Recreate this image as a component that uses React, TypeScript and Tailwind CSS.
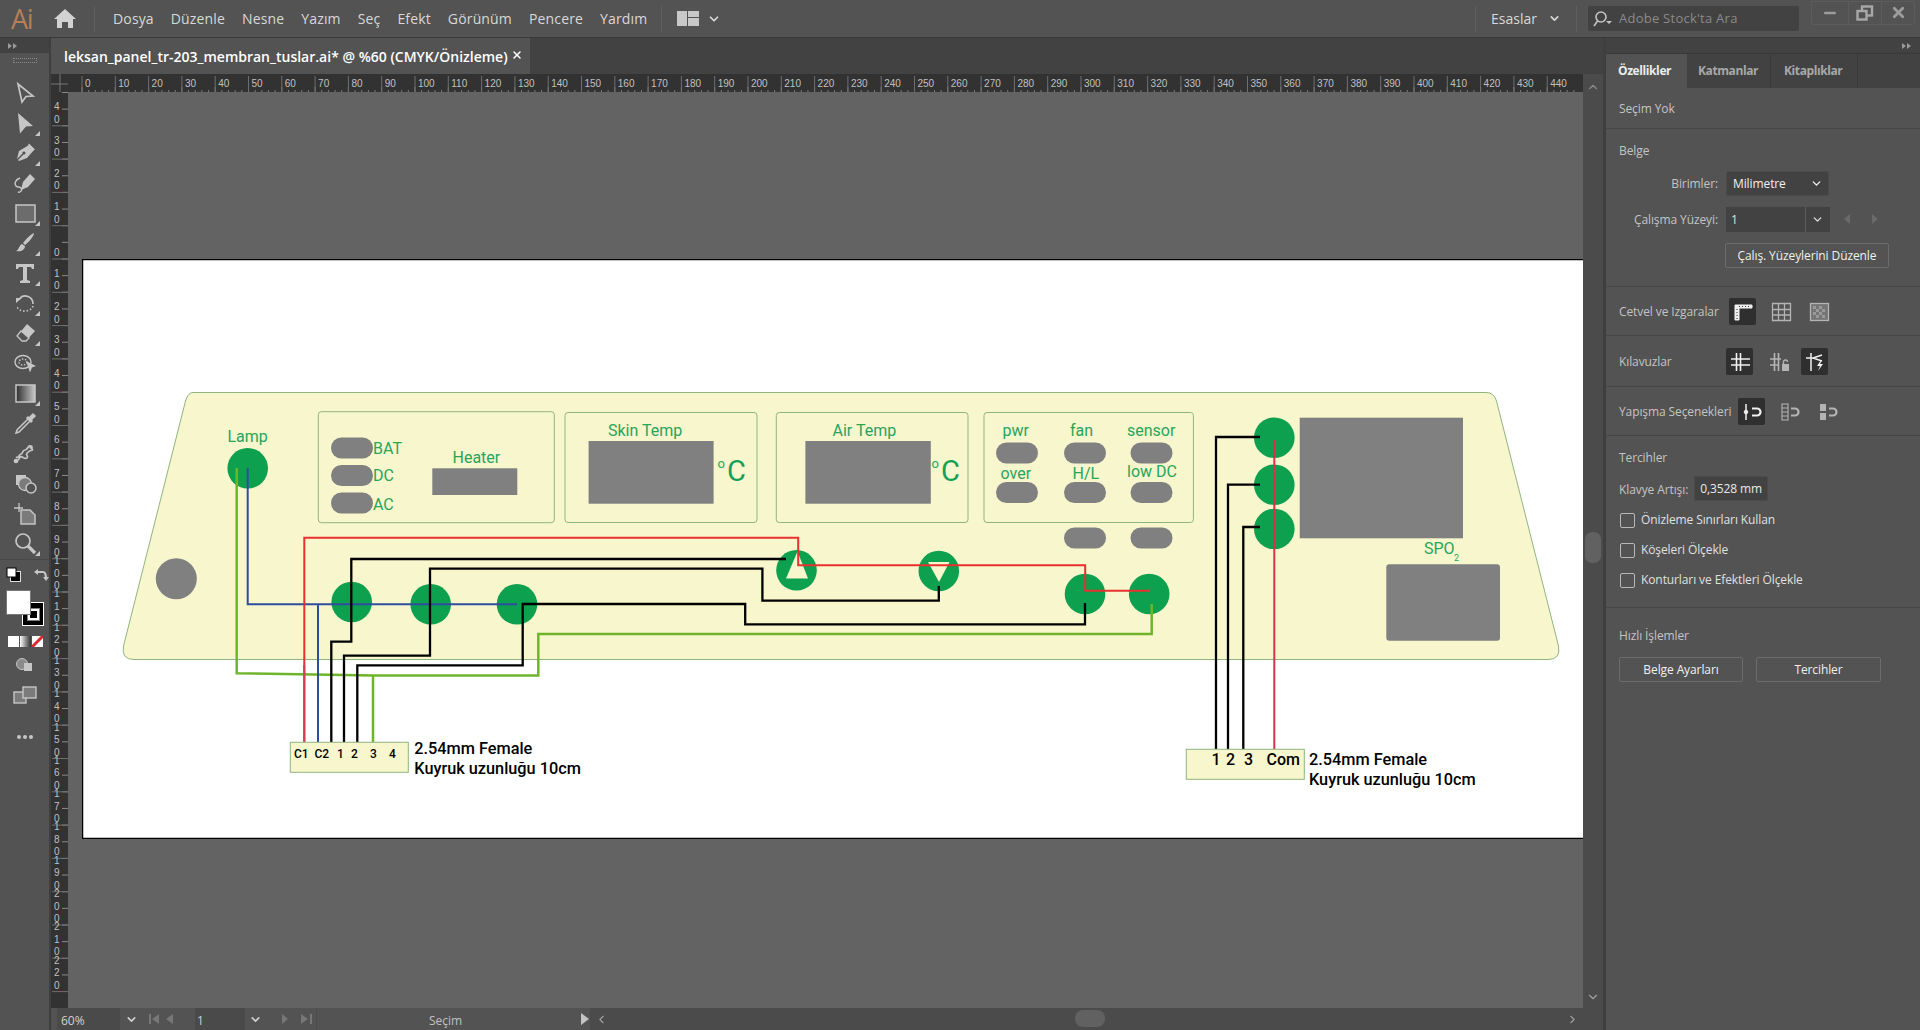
import { ChevronDown, ChevronUp, ChevronLeft, ChevronRight, Minus, X } from "lucide-react";
import type { ReactNode } from "react";

const menus = ["Dosya", "Düzenle", "Nesne", "Yazım", "Seç", "Efekt", "Görünüm", "Pencere", "Yardım"];

function TopBar() {
  return (
    <div className="h-[38px] bg-[#535353] border-b border-[#3a3a3a] flex items-center relative text-[#d8d8d8] text-[14px]">
      <div className="w-[44px] pl-[11px] text-[27px] leading-none text-[#b67f55] font-['Open_Sans',sans-serif] tracking-tighter">Ai</div>
      <svg className="ml-[10px]" width="22" height="19" viewBox="0 0 22 19" fill="#d2d2d2">
        <path d="M11 0 22 10h-3v9h-5v-6H8v6H3v-9H0z" />
      </svg>
      <div className="ml-[18px] h-[26px] w-px bg-[#5e5e5e]" />
      <div className="ml-[18px] flex gap-[17px] tracking-[0.15px]">
        {menus.map((m) => (
          <span key={m}>{m}</span>
        ))}
      </div>
      <div className="ml-[14px] h-[26px] w-px bg-[#5e5e5e]" />
      <svg className="ml-[15px]" width="22" height="15" viewBox="0 0 22 15">
        <rect width="10" height="15" fill="#c8c8c8" />
        <rect x="11" width="11" height="6" fill="#c8c8c8" />
        <rect x="11" y="7" width="11" height="8" fill="#c8c8c8" />
      </svg>
      <ChevronDown className="ml-[8px] w-[14px] h-[14px]" strokeWidth={3} />
      <div className="ml-auto h-[26px] w-px bg-[#5e5e5e]" />
      <span className="ml-[15px]">Esaslar</span>
      <ChevronDown className="ml-[11px] w-[13px] h-[13px]" strokeWidth={3} />
      <div className="ml-[15px] h-[26px] w-px bg-[#5e5e5e]" />
      <div className="ml-[11px] w-[211px] h-[25px] bg-[#424242] rounded-[2px] flex items-center pl-[3px] text-[#8a8a8a] text-[13px] tracking-[0.25px]">
        <svg width="27" height="18" viewBox="0 0 27 18" fill="none" stroke="#c4c4c4" strokeWidth="1.6">
          <circle cx="10" cy="7" r="5" />
          <path d="M6.5 11 3 16" />
          <path d="M15 11h6l-3 3z" fill="#c4c4c4" stroke="none" />
        </svg>
        <span className="ml-[1px]">Adobe Stock'ta Ara</span>
      </div>
      <div className="ml-[12px] mr-[5px] w-[104px] h-[24px] -mt-[12px] border border-[#5c5c5c] rounded-b-[3px] flex items-center text-[#9c9c9c]">
        <div className="w-[36px] flex justify-center">
          <Minus className="w-[16px] h-[16px]" strokeWidth={4} />
        </div>
        <div className="w-[34px] h-full border-x border-[#5c5c5c] flex items-center justify-center">
          <svg width="18" height="16" viewBox="0 0 18 16" fill="none" stroke="#a8a8a8" strokeWidth="2.4">
            <rect x="6" y="1.5" width="10" height="9" />
            <rect x="1.5" y="6" width="9" height="8.5" fill="#535353" />
          </svg>
        </div>
        <div className="flex-1 flex justify-center">
          <X className="w-[17px] h-[17px]" strokeWidth={4} />
        </div>
      </div>
    </div>
  );
}

function Collapse() {
  return (
    <svg width="9" height="6" viewBox="0 0 9 6" fill="#9a9a9a">
      <path d="M0 0v6l4-3zM5 0v6l4-3z" />
    </svg>
  );
}

const c = "#c6c6c6";
const tools: { icon: ReactNode; corner?: boolean }[] = [
  { icon: <path d="M5 3 20 15l-7 .5-4 5.5z" fill="none" stroke={c} strokeWidth="1.7" /> },
  { icon: <path d="M5 2 20 15l-7 .5-6 7z" fill={c} />, corner: true },
  { icon: <g><path d="M16 4 21 9l-7 8-8 3-1-1 5.500-5.500a1.500 1.500 0 1 0-1-1L4 18l2-8z" fill={c} /><path d="M16 2.500 22 8.500l-1.500 1L15 4z" fill={c} /></g>, corner: true },
  { icon: <g><path d="M17 3 22 8l-7 8-7 3 2-8z" fill={c} /><path d="M7 7C2 9 1 13 3 15s3 0 5 2-1 5-3 4" fill="none" stroke={c} strokeWidth="1.500" /></g> },
  { icon: <rect x="3" y="4" width="19" height="17" fill="#6c6c6c" stroke={c} strokeWidth="1.500" />, corner: true },
  { icon: <g><path d="M21 2c0 3-5 9-9 12l-2-2C13 8 18 3 21 2z" fill={c} /><path d="M9 13l3 2c0 4-4 6-9 5 3-1 3-6 6-7z" fill={c} /></g>, corner: true },
  { icon: <path d="M3 3h18v5h-2l-1-2h-4v13l3 1v2H7v-2l3-1V6H6L5 8H3z" fill={c} />, corner: true },
  { icon: <g fill="none" stroke={c} strokeWidth="1.600"><path d="M7 7c4-4 13-2 13 6" /><path d="M20 15c-1 5-12 8-16 1" strokeDasharray="1.500 2" /><path d="M3 12V7h6z" fill={c} stroke="none" /></g>, corner: true },
  { icon: <g><path d="M14 3 22 10l-9 10-8-6z" fill={c} /><path d="M8 10l8 7-3 3H9l-5-5z" fill="#535353" stroke={c} strokeWidth="1.300" /></g>, corner: true },
  { icon: <g fill="none" stroke={c} strokeWidth="1.400"><ellipse cx="10" cy="11" rx="8" ry="6.500" /><ellipse cx="10" cy="11" rx="4" ry="3" strokeDasharray="1.500 1.500" /><path d="M13 10 23 15l-4 1.500-2 5z" fill={c} stroke="none" /></g> },
  { icon: <g><rect x="3" y="4" width="19" height="17" stroke={c} strokeWidth="1.500" fill="url(#toolgrad)" /></g>, corner: true },
  { icon: <g fill="none" stroke={c} strokeWidth="1.500"><path d="M15 8 4 19l-1 3 3-1L17 10" /><path d="M14 6l5 5M17 7l3-3 1 1-3 3" strokeWidth="3" /></g> },
  { icon: <g fill="none" stroke={c} strokeWidth="1.700"><path d="M3 16c3 2 3-3 5-3s1-4 4-4 3-5 5-4c2 0 1 3 3 4-3 0-4 1-6 3s2 3 0 5-6-3-7-1-1 3-2 3" /><circle cx="3" cy="20" r="1.500" fill={c} /><circle cx="18" cy="6" r="1" fill={c} /></g> },
  { icon: <g><rect x="3" y="4" width="10" height="10" fill={c} /><circle cx="12" cy="13" r="6.500" fill="#7b7b7b" stroke={c} strokeWidth="1.300" /><circle cx="18" cy="17" r="5" fill="#535353" stroke={c} strokeWidth="1.500" /></g> },
  { icon: <g><path d="M6 2v9M1 7h9" stroke={c} strokeWidth="1.300" /><path d="M8 9h9l5 5v9H8z" fill="#7b7b7b" stroke={c} strokeWidth="1.500" /></g> },
  { icon: <g fill="none" stroke={c} strokeWidth="1.700"><circle cx="10" cy="10" r="7" /><path d="M15 15l7 7" strokeWidth="3.200" /></g>, corner: true },
];

function ToolBar() {
  return (
    <div className="w-[51px] bg-[#535353] border-r-[2px] border-[#3f3f3f] flex flex-col items-center relative">
      <div className="w-full h-[15px] bg-[#424242] flex items-center pl-[8px]">
        <Collapse />
      </div>
      <div className="mt-[5px] w-[24px] h-[5px] border-x border-y border-dotted border-[#8a8a8a]" />
      <svg className="absolute w-0 h-0">
        <defs>
          <linearGradient id="toolgrad">
            <stop offset="0" stopColor="#2d2d2d" />
            <stop offset="1" stopColor="#c8c8c8" />
          </linearGradient>
        </defs>
      </svg>
      <div className="mt-[15px] flex flex-col">
        {tools.map((t, i) => (
          <div key={i} className="w-[30px] h-[30px] flex items-center justify-center relative">
            <svg width="24" height="24" viewBox="0 0 24 24">{t.icon}</svg>
            {t.corner && <span className="absolute right-0 bottom-[2px] w-0 h-0 border-l-[5px] border-l-transparent border-b-[5px] border-b-[#c6c6c6]" />}
          </div>
        ))}
      </div>
      <div className="w-full mt-[1px] border-t border-[#484848] pt-[5px] flex flex-col items-center">
        <div className="w-full flex items-center pl-[6px] gap-[12px] h-[20px]">
          <svg width="16" height="16" viewBox="0 0 16 16">
            <rect x="4.500" y="4.500" width="10" height="10" fill="#000" stroke="#ddd" />
            <rect x="1" y="1" width="9" height="9" fill="#fff" stroke="#000" />
          </svg>
          <svg width="15" height="15" viewBox="0 0 15 15" fill="none" stroke={c} strokeWidth="2.200">
            <path d="M3 4h6c2 0 3 2 3 7" />
            <path d="M0 4l4-3v6zM9 9h6l-3 4z" fill={c} stroke="none" />
          </svg>
        </div>
        <div className="relative w-full h-[38px] mt-[5px]">
          <div className="absolute left-[22px] top-[12px] w-[22px] h-[24px] bg-black border border-white flex items-center justify-center">
            <div className="w-[11px] h-[11px] border-[2px] border-white outline outline-[#808080]" />
          </div>
          <div className="absolute left-[6px] top-0 w-[25px] h-[25px] bg-white border border-[#777]" />
        </div>
        <div className="w-full flex pl-[8px] mt-[8px]">
          <div className="w-[11px] h-[11px] bg-white" />
          <div className="w-[11px] h-[11px] mx-[1px] bg-gradient-to-r from-white to-[#333]" />
          <svg width="11" height="11" viewBox="0 0 11 11">
            <rect width="11" height="11" fill="#fff" />
            <path d="M0 11 11 0" stroke="#e0262c" strokeWidth="3" />
          </svg>
        </div>
        <svg className="mt-[10px]" width="18" height="16" viewBox="0 0 18 16">
          <circle cx="6" cy="7" r="5.500" fill="#8a8a8a" stroke={c} />
          <rect x="8" y="6" width="8" height="8" fill={c} />
        </svg>
        <svg className="mt-[13px]" width="24" height="18" viewBox="0 0 24 18" fill="#7b7b7b" stroke={c} strokeWidth="1.400">
          <rect x="1" y="6" width="12" height="11" />
          <rect x="10" y="1" width="13" height="11" />
        </svg>
        <div className="mt-[31px] flex gap-[2px]">
          <span className="w-[4px] h-[4px] rounded-full bg-[#c6c6c6]" />
          <span className="w-[4px] h-[4px] rounded-full bg-[#c6c6c6]" />
          <span className="w-[4px] h-[4px] rounded-full bg-[#c6c6c6]" />
        </div>
      </div>
    </div>
  );
}

const hMajor = Array.from({ length: 45 }, (_, i) => i * 10);
const hMinor = Array.from({ length: 225 }, (_, i) => i * 2);
const vMajor = Array.from({ length: 27 }, (_, i) => (i - 4) * 10);
const vMinor = Array.from({ length: 54 }, (_, i) => (i - 10) * 5);

function HorizontalRuler() {
  return (
    <svg className="block bg-[#323232]" width="1532" height="18" viewBox="51 74 1532 18">
      {hMinor.map((v) => (
        <line key={v} x1={82 + v * 3.33} x2={82 + v * 3.33} y1={v % 5 === 0 ? 87 : 90} y2="92" stroke="#7c7c7c" />
      ))}
      {hMajor.map((v) => (
        <g key={v}>
          <line x1={82 + v * 3.33} x2={82 + v * 3.33} y1="76" y2="92" stroke="#6e6e6e" />
          <text x={85 + v * 3.33} y="87" className="text-[10px] fill-[#c0c0c0] font-['Liberation_Sans',sans-serif]">{v}</text>
        </g>
      ))}
      <path d="M51 84H68M60 74V92" stroke="#777" />
    </svg>
  );
}

function VerticalRuler() {
  return (
    <svg className="block bg-[#323232] shrink-0" width="17" height="916" viewBox="51 92 17 916">
      {vMinor.map((v) => (
        <line key={v} x1="62" x2="68" y1={259 + v * 3.33} y2={259 + v * 3.33} stroke="#8a8a8a" />
      ))}
      {vMajor.map((v) => {
        const y = 259 + v * 3.33;
        const digits = String(Math.abs(v)).split("").reverse();
        return (
          <g key={v}>
            <line x1="52" x2="68" y1={y} y2={y} stroke="#6e6e6e" />
            {digits.map((d, i) => (
              <text key={i} x="54" y={y - 3 - i * 12.5} className="text-[10px] fill-[#c0c0c0] font-['Liberation_Sans',sans-serif]">{d}</text>
            ))}
          </g>
        );
      })}
    </svg>
  );
}

const pills = [
  [331, 437.5], [331, 465], [331, 492.500],
  [996, 442.500], [1064, 442.500], [1130.500, 442.500],
  [996, 482], [1064, 482], [1130.500, 482],
  [1064, 527.500], [1130.500, 527.500],
];

const greenLabels: [string, number, number][] = [
  ["Lamp", 227.500, 442], ["BAT", 373, 454], ["DC", 373, 481], ["AC", 373, 510],
  ["Heater", 452.500, 463], ["Skin Temp", 608, 436], ["Air Temp", 832.500, 436],
  ["pwr", 1002.500, 436], ["fan", 1070, 436], ["sensor", 1127, 436],
  ["over", 1000.500, 478.500], ["H/L", 1072.500, 479], ["low DC", 1127, 477],
];

const buttons = [
  [247.700, 468.300], [351.700, 602], [430.700, 604.300], [517, 604.300],
  [796.500, 570.300], [938.800, 571], [1085, 594], [1149.200, 594],
  [1274.300, 437.700], [1274.300, 484.700], [1274.300, 529],
];

const panelBoxes = [
  [318.300, 411.700, 236, 111], [565, 412.500, 192, 110], [776.300, 412.500, 191.700, 110], [984, 412.500, 209.400, 110],
];

function Diagram() {
  return (
    <svg className="block bg-white font-['Roboto',sans-serif]" width="1501" height="580" viewBox="82 259 1501 580">
      <path d="M82 259.500H1583M82.500 259V838.500M82 838.500H1583" stroke="#000" strokeWidth="1.500" fill="none" />
      <path d="M193 392.500H1486Q1494 392.500 1496.500 401L1558.500 646Q1561 659.500 1548 659.500H134Q121 659.500 123.500 646L185.500 401Q188 392.500 193 392.500Z" fill="#f8f6cd" stroke="#8fb57f" />
      {panelBoxes.map(([x, y, w, h]) => (
        <rect key={x} x={x} y={y} width={w} height={h} rx="3" fill="none" stroke="#8fb57f" />
      ))}

      <circle cx="176.300" cy="578.700" r="20.500" fill="#808080" />
      {pills.map(([x, y]) => (
        <rect key={`${x}-${y}`} x={x} y={y} width="42" height="21" rx="10.500" fill="#808080" />
      ))}
      <rect x="432.300" y="468.300" width="85" height="26.700" fill="#808080" />
      <rect x="588.600" y="441" width="125" height="62.700" fill="#808080" />
      <rect x="805.400" y="441" width="125.400" height="62.700" fill="#808080" />
      <rect x="1299.700" y="417.700" width="163.300" height="120.600" fill="#808080" />
      <rect x="1386.300" y="564.300" width="113.700" height="76.400" rx="3" fill="#808080" />

      {buttons.map(([x, y]) => (
        <circle key={`${x}-${y}`} cx={x} cy={y} r="20.300" fill="#0da04f" />
      ))}
      <path d="M797.500 551.500 808 578.500H786Z" fill="#f8f6cd" />
      <path d="M928 562H949.500L939 582Z" fill="#f8f6cd" />

      {greenLabels.map(([t, x, y]) => (
        <text key={t} x={x} y={y} className="text-[16px] fill-[#26a55c]">{t}</text>
      ))}
      <text x="717.500" y="468" className="text-[13px] fill-[#26a55c]">o</text>
      <text x="727" y="480.500" className="text-[29px] fill-[#14a056]">C</text>
      <text x="931.500" y="468" className="text-[13px] fill-[#26a55c]">o</text>
      <text x="941" y="480.500" className="text-[29px] fill-[#14a056]">C</text>
      <text x="1424" y="554" className="text-[16px] fill-[#26a55c]">SPO</text>
      <text x="1454" y="561" className="text-[9px] fill-[#26a55c]">2</text>

      <g fill="none" strokeWidth="2">
        <path d="M236.700 468V673.300L373 675.500V742M373 675.500H538.300V634H1151.700V604" stroke="#6fb52c" strokeWidth="2.500" />
        <path d="M247.700 468V604.300H517M318 604.300V742" stroke="#2e4d9e" />
        <path d="M304.300 742V537.700H798.200V565.300H1085.200V590.700H1149" stroke="#e7302f" />
        <path d="M304.300 742V665" stroke="#d83a57" />
        <path d="M1274.300 440V749" stroke="#dc2f50" />
      </g>
      <g fill="none" stroke="#000" strokeWidth="2.300">
        <path d="M331.300 742V641.700H351.300V559H786" />
        <path d="M344 742V655.700H430V568.700H762.400V600.700H938.800V586" />
        <path d="M357.300 742V665.300H522.700V604H745.200V624.300H1085V603" />
        <path d="M1216 749V437H1260M1228 749V484.700H1260M1243.300 749V527H1260" />
      </g>

      <rect x="290.300" y="742.300" width="118" height="30" fill="#f8f6cd" stroke="#8fb57f" />
      <rect x="1186.300" y="749.300" width="118" height="30" fill="#f8f6cd" stroke="#8fb57f" />
      <g className="fill-black font-medium">
        {([["C1", 294], ["C2", 314.500], ["1", 337], ["2", 351], ["3", 370], ["4", 389]] as [string, number][]).map(([t, x]) => (
          <text key={t} x={x} y="758" className="text-[12px]">{t}</text>
        ))}
        {([["1", 1211.500], ["2", 1226], ["3", 1244], ["Com", 1266.500]] as [string, number][]).map(([t, x]) => (
          <text key={t} x={x} y="765" className="text-[16px]">{t}</text>
        ))}
        <text x="414.300" y="754" className="text-[16.3px]">2.54mm Female</text>
        <text x="414.300" y="774" className="text-[16.3px]">Kuyruk uzunluğu 10cm</text>
        <text x="1309" y="765" className="text-[16.3px]">2.54mm Female</text>
        <text x="1309" y="785" className="text-[16.3px]">Kuyruk uzunluğu 10cm</text>
      </g>
    </svg>
  );
}

function StatusBar() {
  return (
    <div className="h-[22px] bg-[#535353] flex items-center text-[#d0d0d0] text-[12px]">
      <div className="ml-[6px] w-[63px] h-full bg-[#4a4a4a] pl-[4px] pt-[4px] flex items-center">60%</div>
      <div className="w-[22px] flex justify-center">
        <ChevronDown className="w-[13px] h-[13px]" strokeWidth={3} />
      </div>
      <svg className="ml-[7px] shrink-0" width="34" height="12" viewBox="0 0 34 12" fill="#777">
        <path d="M0 1h2v10H0zM10 1v10L3 6zM24 1v10l-7-5z" />
      </svg>
      <div className="ml-[12px] w-[50px] h-full bg-[#4a4a4a] pl-[2px] pt-[4px] flex items-center">1</div>
      <div className="w-[20px] flex justify-center">
        <ChevronDown className="w-[13px] h-[13px]" strokeWidth={3} />
      </div>
      <svg className="ml-[17px] shrink-0" width="34" height="12" viewBox="0 0 34 12" fill="#777">
        <path d="M0 1v10l6-5zM19 1v10l7-5zM28 1h2v10h-2z" />
      </svg>
      <div className="w-[258px] text-[#c0c0c0] border-l border-[#4c4c4c] h-full pt-[4px] flex items-center justify-center">Seçim</div>
      <svg className="ml-[7px] shrink-0" width="8" height="12" viewBox="0 0 8 12" fill="#c4c4c4">
        <path d="M0 0v12l8-6z" />
      </svg>
      <div className="ml-[1px] flex-1 h-full bg-[#4b4b4b] flex items-center relative pl-[5px]">
        <ChevronLeft className="w-[13px] h-[13px] text-[#a0a0a0]" />
        <div className="absolute left-[485px] top-[2px] w-[30px] h-[17px] rounded-[8px] bg-[#616161]" />
        <ChevronRight className="ml-auto mr-[24px] w-[13px] h-[13px] text-[#a0a0a0]" />
      </div>
    </div>
  );
}

function Section({ children, className }: { children: ReactNode; className: string }) {
  return <div className={`pl-[13px] border-b border-[#474747] ${className}`}>{children}</div>;
}

function IconBox({ active, className, children }: { active?: boolean; className: string; children: ReactNode }) {
  return (
    <div className={`absolute top-0 w-[27px] h-[27px] rounded-[2px] flex items-center justify-center ${active ? "bg-[#2f2f2f]" : ""} ${className}`}>
      <svg width="22" height="22" viewBox="0 0 22 22" fill="none" stroke={active ? "#f0f0f0" : "#b4b4b4"}>{children}</svg>
    </div>
  );
}

function Check({ label }: { label: string }) {
  return (
    <div className="flex items-center h-[30px] text-[#e0e0e0]">
      <span className="w-[15px] h-[15px] ml-px rounded-[2px] border border-[#b8b8b8]" />
      <span className="ml-[6px]">{label}</span>
    </div>
  );
}

function RightPanel() {
  return (
    <div className="w-[317px] bg-[#535353] border-l-[3px] border-[#3f3f3f] text-[12px] text-[#c4c4c4] font-['Open_Sans',sans-serif] tracking-[-0.1px]">
      <div className="h-[15px] bg-[#424242] flex items-center justify-end pr-[9px]">
        <Collapse />
      </div>
      <div className="h-[35px] flex bg-[#424242] font-bold text-[#a8a8a8] border-t border-[#383838] tracking-[-0.4px]">
        <div className="w-[81px] pl-[12px] flex items-center bg-[#535353] text-[#ececec]">Özellikler</div>
        <div className="w-[84px] pl-[11px] flex items-center border-r border-[#3a3a3a]">Katmanlar</div>
        <div className="w-[87px] pl-[13px] flex items-center border-r border-[#3a3a3a]">Kitaplıklar</div>
      </div>
      <Section className="h-[41px] pt-[2px] flex items-center">Seçim Yok</Section>
      <Section className="h-[158px] relative">
        <div className="pt-[13px]">Belge</div>
        <div className="absolute left-0 top-[42px] w-[112px] h-[25px] flex items-center justify-end">Birimler:</div>
        <div className="absolute left-[120px] top-[42px] w-[103px] h-[25px] bg-[#424242] border border-[#4b4b4b] rounded-[2px] flex items-center pl-[6px] pr-[5px] text-[#f0f0f0]">
          <span>Milimetre</span>
          <ChevronDown className="ml-auto w-[13px] h-[13px]" strokeWidth={2.500} />
        </div>
        <div className="absolute left-0 top-[78px] w-[112px] h-[25px] flex items-center justify-end whitespace-nowrap">Çalışma Yüzeyi:</div>
        <div className="absolute left-[120px] top-[78px] w-[104px] h-[25px] bg-[#424242] flex items-center text-[#e0e0e0]">
          <span className="w-[80px] pl-[5px] border-r border-[#5c5c5c] h-full flex items-center">1</span>
          <ChevronDown className="ml-[5px] w-[13px] h-[13px]" strokeWidth={2.500} />
        </div>
        <svg className="absolute left-[238px] top-[85px]" width="34" height="10" viewBox="0 0 34 10" fill="#6a6a6a">
          <path d="M6 0v10L0 5zM28 0v10l6-5z" />
        </svg>
        <div className="absolute left-[119px] top-[114px] w-[164px] h-[25px] border border-[#6c6c6c] rounded-[2px] flex items-center justify-center text-[#f0f0f0]">Çalış. Yüzeylerini Düzenle</div>
      </Section>
      <Section className="h-[49px] pt-[2px] relative flex items-center">
        <span>Cetvel ve Izgaralar</span>
        <div className="absolute left-0 top-[11px] w-full">
          <IconBox active className="left-[123px]">
            <path d="M3 4h17v3H7v12H3z" fill="#f0f0f0" />
            <path d="M7 5.500h11M5 8v10" stroke="#2f2f2f" strokeDasharray="1 2" />
          </IconBox>
          <IconBox className="left-[161px]">
            <path d="M2.500 2.500h18v17h-18zM8.500 2.500v17M14.500 2.500v17M2.500 8.500h18M2.500 14h18" strokeWidth="1.300" />
          </IconBox>
          <IconBox className="left-[199px]">
            <rect x="2.500" y="2.500" width="18" height="17" fill="#757575" strokeWidth="1.300" />
            <path d="M5 5h3v3H5zM11 5h3v3h-3zM8 8h3v3H8zM14 8h3v3h-3zM5 11h3v3H5zM11 11h3v3h-3zM8 14h3v3H8zM14 14h3v3h-3z" fill="#9a9a9a" stroke="none" />
          </IconBox>
        </div>
      </Section>
      <Section className="h-[51px] pt-[2px] relative flex items-center">
        <span>Kılavuzlar</span>
        <div className="absolute left-0 top-[12px] w-full">
          <IconBox active className="left-[120px]">
            <path d="M7.500 2v18M11.500 2v18M2 8h19M2 14h19" strokeWidth="1.600" />
          </IconBox>
          <IconBox className="left-[159px]">
            <path d="M6.500 2v18M10.500 2v18M2 8h11M2 14h9" strokeWidth="1.600" />
            <path d="M14 13h7v7h-7z" fill="#b4b4b4" stroke="none" />
            <path d="M15.500 13v-2a2 2 0 0 1 4 0" strokeWidth="1.300" />
          </IconBox>
          <IconBox active className="left-[195px]">
            <path d="M7 2v18M2 7h7M9 7l9-3M9 7l9 3" strokeWidth="1.500" />
            <path d="M17 9l-4 6h3l-2 5 5-7h-3l2-4z" fill="#f0f0f0" stroke="none" />
          </IconBox>
        </div>
      </Section>
      <Section className="h-[49px] pt-[2px] relative flex items-center">
        <span>Yapışma Seçenekleri</span>
        <div className="absolute left-0 top-[11px] w-full">
          <IconBox active className="left-[132px]">
            <path d="M5 3v16" strokeWidth="1.500" />
            <circle cx="5" cy="11" r="1.800" fill="#f0f0f0" />
            <path d="M11 7.500h5a3.500 3.500 0 0 1 0 7h-5" strokeWidth="2.200" />
          </IconBox>
          <IconBox className="left-[170px]">
            <path d="M3 3h6v16H3zM3 7h6M3 11h6M3 15h6" strokeWidth="1.100" />
            <path d="M12 7.500h4a3.500 3.500 0 0 1 0 7h-4" strokeWidth="2.200" />
          </IconBox>
          <IconBox className="left-[208px]">
            <path d="M3 3h6v7H3zM3 12h6v7H3z" fill="#b4b4b4" stroke="none" />
            <path d="M12 7.500h4a3.500 3.500 0 0 1 0 7h-4" strokeWidth="2.200" />
          </IconBox>
        </div>
      </Section>
      <Section className="h-[172px]">
        <div className="pt-[13px] h-[40px]">Tercihler</div>
        <div className="flex items-center h-[25px]">
          <span className="pt-[2px]">Klavye Artışı:</span>
          <span className="ml-[6px] w-[74px] h-[25px] bg-[#424242] border border-[#4b4b4b] flex items-center pl-[5px] text-[#e8e8e8]">0,3528 mm</span>
        </div>
        <div className="mt-[4px]">
          <Check label="Önizleme Sınırları Kullan" />
          <Check label="Köşeleri Ölçekle" />
          <Check label="Konturları ve Efektleri Ölçekle" />
        </div>
      </Section>
      <div className="pl-[13px]">
        <div className="pt-[19px]">Hızlı İşlemler</div>
        <div className="mt-[12px] flex gap-[13px] text-[#f0f0f0]">
          <div className="w-[124px] h-[25px] border border-[#6c6c6c] rounded-[2px] flex items-center justify-center">Belge Ayarları</div>
          <div className="w-[125px] h-[25px] border border-[#6c6c6c] rounded-[2px] flex items-center justify-center">Tercihler</div>
        </div>
      </div>
    </div>
  );
}

export default function App() {
  return (
    <div className="w-[1920px] h-[1030px] overflow-hidden flex flex-col bg-[#535353] font-['Open_Sans',sans-serif]">
      <TopBar />
      <div className="flex-1 flex min-h-0">
        <ToolBar />
        <div className="flex-1 flex flex-col min-w-0">
          <div className="h-[36px] bg-[#424242] flex items-center">
            <div className="w-[479px] h-full bg-[#535353] flex items-center pl-[13px] text-white text-[14px] font-semibold whitespace-nowrap">
              <span>leksan_panel_tr-203_membran_tuslar.ai* @ %60 (CMYK/Önizleme)</span>
              <X className="ml-[3px] w-[12px] h-[12px] -mt-[3px]" strokeWidth={3} />
            </div>
          </div>
          <div className="h-[18px] flex bg-[#4b4b4b]">
            <HorizontalRuler />
            <div className="flex-1 flex justify-center items-center pt-[8px]">
              <ChevronUp className="w-[14px] h-[14px] text-[#8a8a8a]" />
            </div>
          </div>
          <div className="flex-1 flex min-h-0">
            <VerticalRuler />
            <div className="flex-1 bg-[#636363] pl-[14px] pt-[167px] overflow-hidden">
              <Diagram />
            </div>
            <div className="w-[20px] bg-[#4b4b4b] relative flex flex-col items-center justify-end pb-[4px]">
              <div className="absolute left-[2px] top-[440px] w-[16px] h-[31px] rounded-[7px] bg-[#616161]" />
              <ChevronDown className="w-[14px] h-[14px] text-[#a0a0a0]" />
            </div>
          </div>
          <StatusBar />
        </div>
        <RightPanel />
      </div>
    </div>
  );
}
